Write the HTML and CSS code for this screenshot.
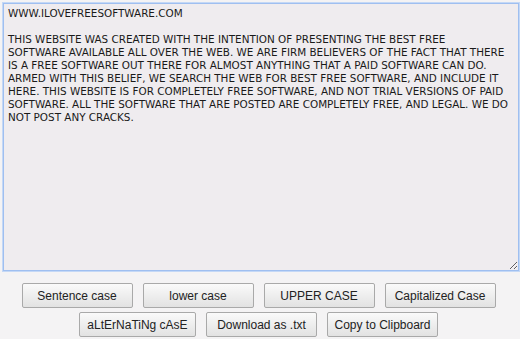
FILE: index.html
```html
<!DOCTYPE html>
<html lang="en">
<head>
<meta charset="UTF-8">
<meta name="viewport" content="width=device-width, initial-scale=1">
<title>Case Converter</title>
<link rel="stylesheet" href="styles.css">
</head>
<body>

<textarea class="editor" id="text" spellcheck="false">WWW.ILOVEFREESOFTWARE.COM

THIS WEBSITE WAS CREATED WITH THE INTENTION OF PRESENTING THE BEST FREE
SOFTWARE AVAILABLE ALL OVER THE WEB. WE ARE FIRM BELIEVERS OF THE FACT THAT THERE
IS A FREE SOFTWARE OUT THERE FOR ALMOST ANYTHING THAT A PAID SOFTWARE CAN DO.
ARMED WITH THIS BELIEF, WE SEARCH THE WEB FOR BEST FREE SOFTWARE, AND INCLUDE IT
HERE. THIS WEBSITE IS FOR COMPLETELY FREE SOFTWARE, AND NOT TRIAL VERSIONS OF PAID
SOFTWARE. ALL THE SOFTWARE THAT ARE POSTED ARE COMPLETELY FREE, AND LEGAL. WE DO
NOT POST ANY CRACKS.</textarea>

<div class="buttons">
  <div class="row">
    <button class="btn">Sentence case</button>
    <button class="btn">lower case</button>
    <button class="btn">UPPER CASE</button>
    <button class="btn">Capitalized Case</button>
  </div>
  <div class="row">
    <button class="btn wide">aLtErNaTiNg cAsE</button>
    <button class="btn">Download as .txt</button>
    <button class="btn">Copy to Clipboard</button>
  </div>
</div>

</body>
</html>
```

FILE: styles.css
```css
body{margin:0;padding:3px 2px 0 3px;background:#f4f3f4;font-family:"Liberation Sans",Arial,sans-serif;}
.editor{display:block;box-sizing:border-box;width:516px;height:268px;margin:0;padding:3px 4px;border:1px solid #9fbff0;box-shadow:0 0 0 1px #c4d8f6;background:#efecef;color:#1a1a1a;font-family:"DejaVu Sans",Verdana,sans-serif;font-size:10.4px;line-height:13px;white-space:pre;overflow:hidden;outline:none;resize:both;}
.buttons{display:flex;flex-direction:column;align-items:center;gap:4px;margin-top:12px;width:511px;}
.row{display:flex;gap:10px;justify-content:center;}
.btn{box-sizing:border-box;width:111px;height:25px;padding:0 6px;border:1px solid #a9a9a9;border-radius:2px;background:linear-gradient(#fafafa,#e2e2e2);color:#222;font-family:"Liberation Sans",Arial,sans-serif;font-size:12px;cursor:pointer;}
.btn.wide{width:117px;}
```
